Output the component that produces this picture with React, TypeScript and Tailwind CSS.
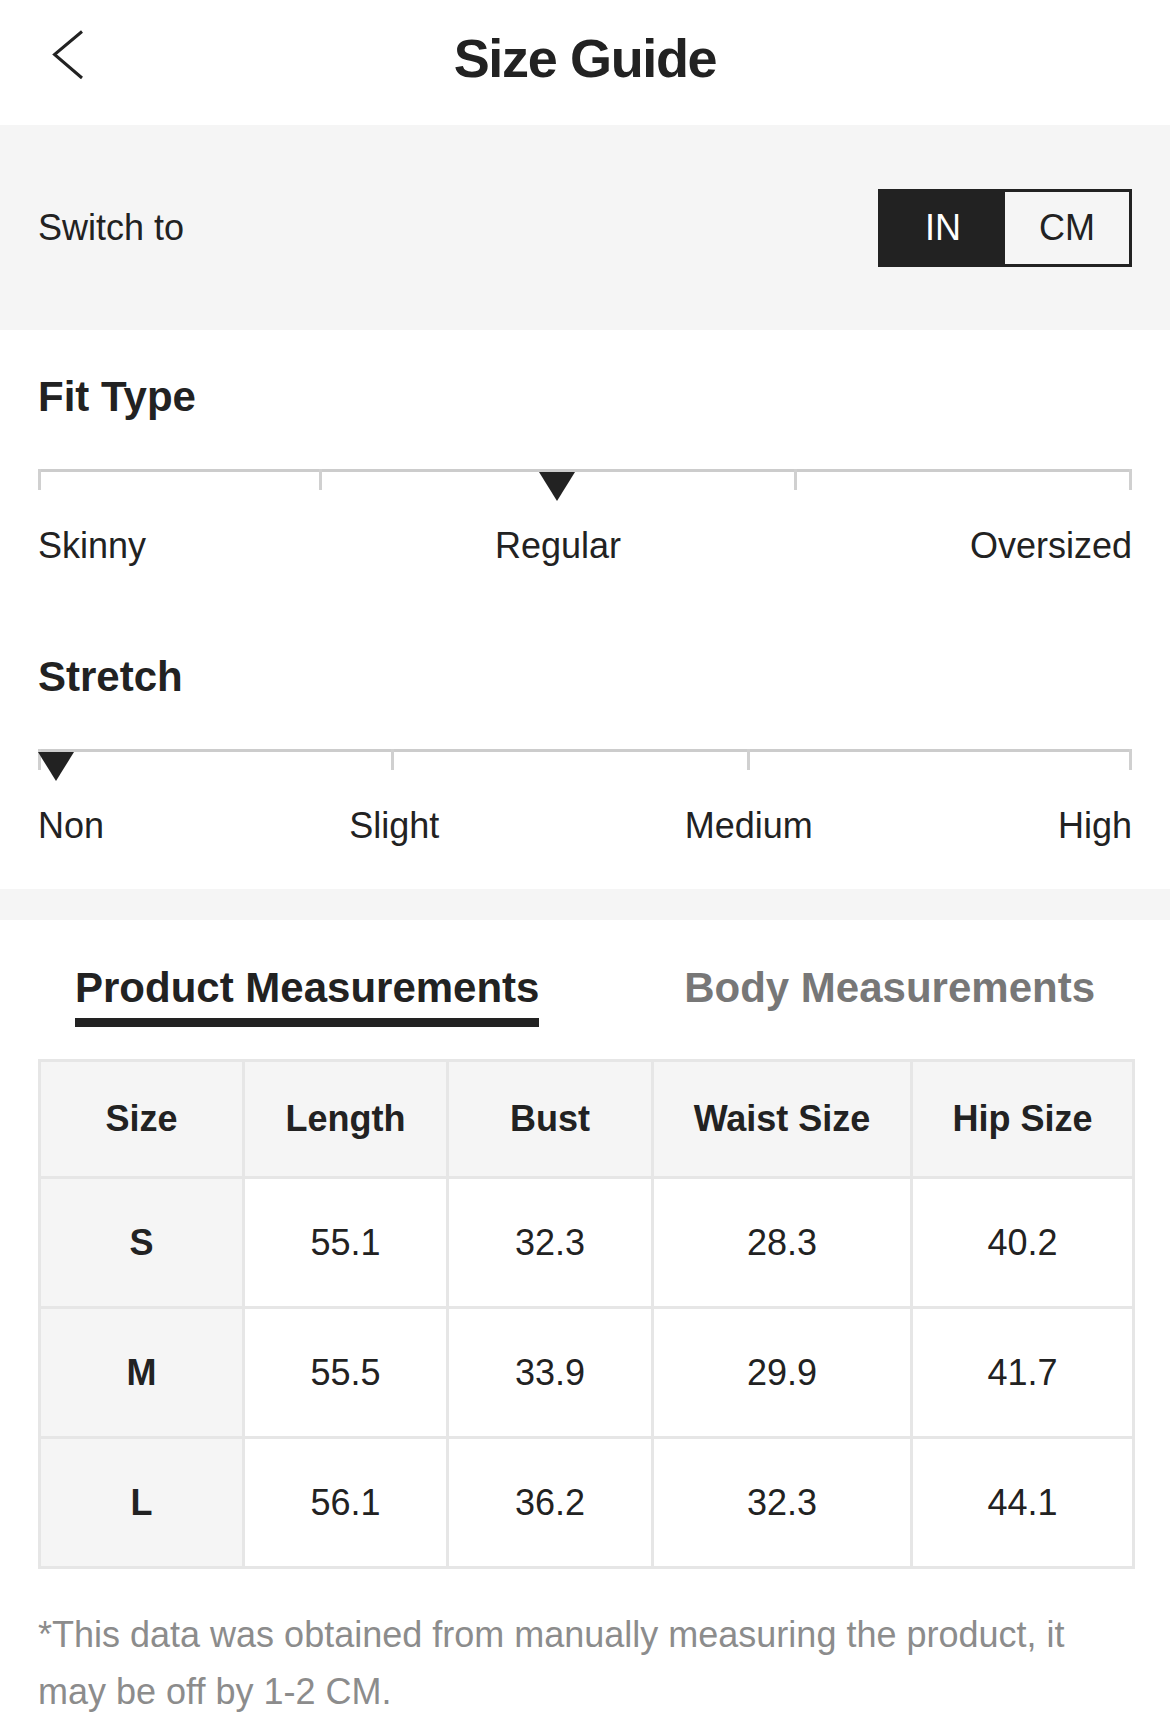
const sizes = [
  { size: "S", length: "55.1", bust: "32.3", waist: "28.3", hip: "40.2" },
  { size: "M", length: "55.5", bust: "33.9", waist: "29.9", hip: "41.7" },
  { size: "L", length: "56.1", bust: "36.2", waist: "32.3", hip: "44.1" },
];

interface ScaleProps {
  labels: string[];
  ticks: number[];
  marker: number;
}

const Scale = ({ labels, ticks, marker }: ScaleProps) => {
  return (
    <div>
      <div className="relative h-[21px]">
        <div className="h-[3px] bg-[#cccccc]" />
        {ticks.map((t, i) => (
          <span
            key={i}
            className="absolute top-0 h-[21px] w-[3px] bg-[#d0d0d0]"
            style={{ left: `calc(${t}% - ${t === 100 ? 3 : t === 0 ? 0 : 1.5}px)` }}
          />
        ))}
        <svg
          className="absolute top-[3px]"
          style={{ left: `calc(${marker}% - ${marker === 0 ? 0 : 18}px)` }}
          width="36"
          height="29"
          viewBox="0 0 36 29"
        >
          <polygon points="0,0 36,0 18,29" fill="#222222" />
        </svg>
      </div>
      <div className="mt-[38px] flex justify-between text-[36px] leading-none">
        {labels.map((l) => (
          <span key={l}>{l}</span>
        ))}
      </div>
    </div>
  );
};

export default function App() {
  return (
    <div className="w-[1170px] bg-white font-['Liberation_Sans',Arial,sans-serif] text-[#222222]">
      <header className="grid h-[125px] grid-cols-[1fr_auto_1fr] items-center pb-[10px]">
        <button className="pl-[52px] pb-[6px]">
          <svg width="32" height="50" viewBox="0 0 32 50" fill="none">
            <path d="M30 1.5 L2.5 24.5 L30 48" stroke="#222222" strokeWidth="3" />
          </svg>
        </button>
        <h1 className="text-[54px] font-bold leading-none tracking-tight">Size Guide</h1>
        <div />
      </header>

      <section className="flex h-[205px] items-center justify-between bg-[#f5f5f5] px-[38px]">
        <span className="text-[36px] leading-none">Switch to</span>
        <div className="flex h-[78px] w-[254px] border-[3px] border-[#222222] text-[36px]">
          <div className="flex w-[124px] items-center justify-center bg-[#222222] text-white">IN</div>
          <div className="flex flex-1 items-center justify-center">CM</div>
        </div>
      </section>

      <section className="px-[38px] pt-[46px] pb-[45px]">
        <h2 className="text-[42px] font-bold leading-none">Fit Type</h2>
        <div className="mt-[51px]">
          <Scale labels={["Skinny", "Regular", "Oversized"]} ticks={[0, 25.8, 69.2, 100]} marker={47.4} />
        </div>
        <h2 className="mt-[92px] text-[42px] font-bold leading-none">Stretch</h2>
        <div className="mt-[51px]">
          <Scale labels={["Non", "Slight", "Medium", "High"]} ticks={[0, 32.4, 64.9, 100]} marker={0} />
        </div>
      </section>

      <div className="h-[31px] bg-[#f5f5f5]" />

      <div className="flex justify-between px-[75px] pt-[47px]">
        <div className="flex flex-col">
          <span className="text-[42px] font-bold leading-none">Product Measurements</span>
          <span className="mt-[9px] h-[9px] bg-[#222222]" />
        </div>
        <span className="text-[42px] font-bold leading-none text-[#777777]">Body Measurements</span>
      </div>

      <div className="px-[38px] pt-[32px]">
        <table className="w-[1094px] table-fixed border-collapse border-[3px] border-[#e6e6e6] text-center text-[36px]">
          <colgroup>
            <col className="w-[204px]" />
            <col className="w-[204px]" />
            <col className="w-[205px]" />
            <col className="w-[259px]" />
            <col className="w-[222px]" />
          </colgroup>
          <thead>
            <tr className="h-[117px] bg-[#f5f5f5] font-bold">
              <th className="border-[3px] border-[#e6e6e6]">Size</th>
              <th className="border-[3px] border-[#e6e6e6]">Length</th>
              <th className="border-[3px] border-[#e6e6e6]">Bust</th>
              <th className="border-[3px] border-[#e6e6e6]">Waist Size</th>
              <th className="border-[3px] border-[#e6e6e6]">Hip Size</th>
            </tr>
          </thead>
          <tbody>
            {sizes.map((row) => (
              <tr key={row.size} className="h-[130px]">
                <td className="border-[3px] border-[#e6e6e6] bg-[#f5f5f5] font-bold">{row.size}</td>
                <td className="border-[3px] border-[#e6e6e6]">{row.length}</td>
                <td className="border-[3px] border-[#e6e6e6]">{row.bust}</td>
                <td className="border-[3px] border-[#e6e6e6]">{row.waist}</td>
                <td className="border-[3px] border-[#e6e6e6]">{row.hip}</td>
              </tr>
            ))}
          </tbody>
        </table>
      </div>

      <p className="px-[38px] pt-[37px] pb-[20px] text-[36px] leading-[57px] text-[#8c8c8c]">
        *This data was obtained from manually measuring the product, it
        <br />
        may be off by 1-2 CM.
      </p>
    </div>
  );
}
